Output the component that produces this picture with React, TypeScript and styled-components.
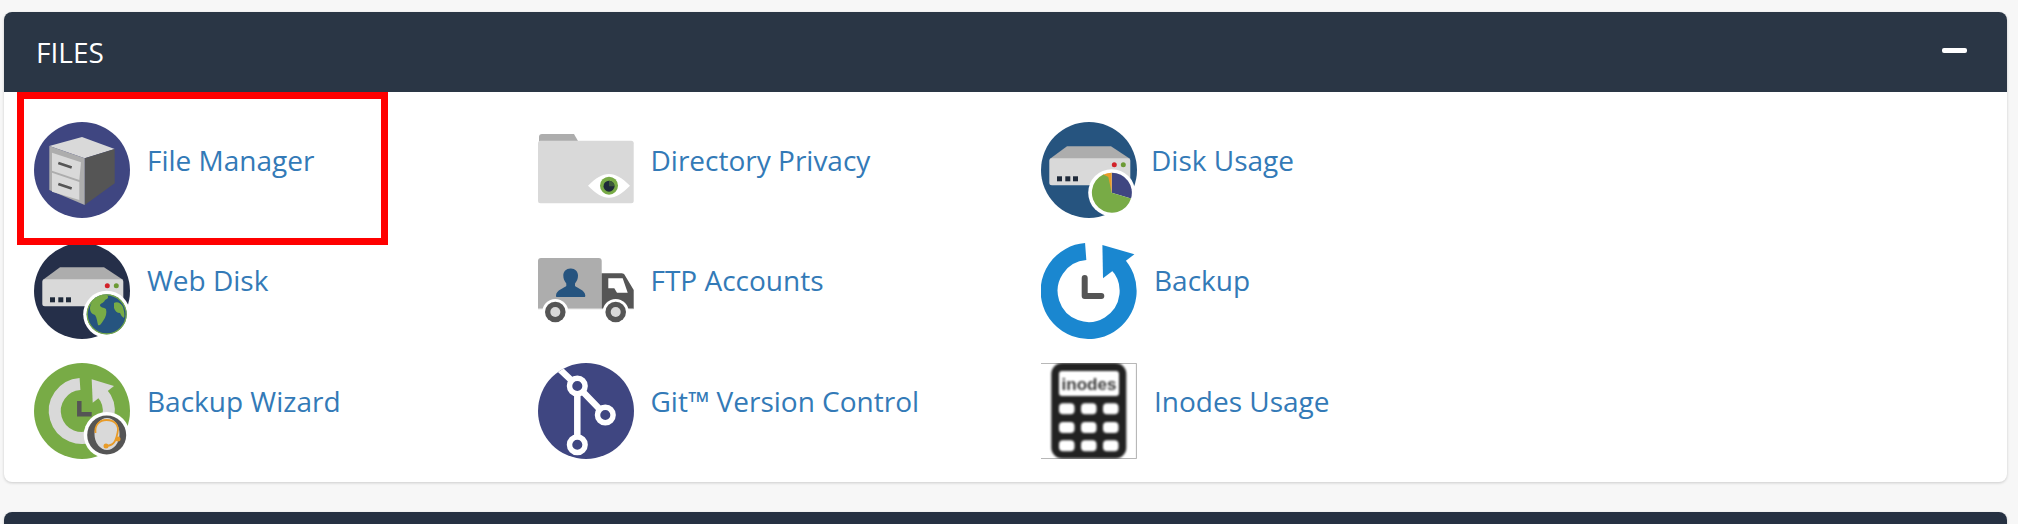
import { FC, ReactNode } from 'react';
import styled, { createGlobalStyle } from 'styled-components';

const GlobalStyle = createGlobalStyle`
  html, body {
    margin: 0;
    height: 524px;
    overflow: hidden;
    background: #f7f7f7;
    font-family: "Open Sans", "Liberation Sans", sans-serif;
  }
`;

const Page = styled.div`
  position: relative;
  display: flex;
  flex-direction: column;
  gap: 30px;
  height: 524px;
  box-sizing: border-box;
  overflow: hidden;
  padding: 12px 11px 0 4px;
`;

const Panel = styled.section`
  flex: none;
  background: #fff;
  border-radius: 8px;
  box-shadow: 0 1px 3px rgba(0, 0, 0, 0.18);
  overflow: hidden;
`;

const PanelHeader = styled.header<{ $dim?: boolean }>`
  display: flex;
  align-items: center;
  justify-content: space-between;
  height: 80px;
  padding: 0 40px 0 32px;
  background: ${({ $dim }) => ($dim ? '#263142' : '#2a3645')};
  color: #fff;
  font-size: 28px;
`;

const CollapseBar = styled.span`
  width: 25px;
  height: 5px;
  margin-top: -4px;
  border-radius: 2px;
  background: #fff;
`;

const PanelBody = styled.div`
  display: grid;
  grid-template-columns: repeat(3, 503.5px);
  grid-auto-rows: 120.5px;
  height: 360px;
  padding: 30px 0 0 30px;
  align-content: start;
`;

const Tool = styled.a<{ $gap: number }>`
  display: flex;
  align-items: flex-start;
  gap: ${({ $gap }) => $gap}px;
  color: #337ab7;
  font-size: 28px;
  line-height: 38px;
  text-decoration: none;
`;

const ToolLabel = styled.span`
  margin-top: 18.5px;
  white-space: nowrap;
`;

const IconBox = styled.svg`
  display: block;
  flex: none;
  width: 96px;
  height: 96px;
`;

const BlurGroup = styled.g`
  filter: blur(0.8px);
`;

const Highlight = styled.div`
  position: absolute;
  left: 17px;
  top: 92px;
  width: 371px;
  height: 153px;
  box-sizing: border-box;
  border: 7px solid #ff0000;
  pointer-events: none;
`;

const ServerBox = () => (
  <>
    <path d="M8.7 37 26 24.3h44L89.3 37z" fill="#adadad" />
    <rect x="8.3" y="36.3" width="81" height="27" rx="2.5" fill="#d9d9d9" />
    <circle cx="73.3" cy="42.7" r="2.5" fill="#d2232a" />
    <circle cx="82.3" cy="42.7" r="2.5" fill="#6c9a35" />
    <rect x="16" y="54.3" width="5" height="5" fill="#1f2a3a" />
    <rect x="24.3" y="54.3" width="5" height="5" fill="#1f2a3a" />
    <rect x="32" y="54.3" width="5" height="5" fill="#1f2a3a" />
  </>
);

const FileManagerIcon = () => (
  <IconBox viewBox="0 0 96 96">
    <circle cx="48" cy="48" r="48" fill="#3f4681" />
    <path d="M15.3 24 48 15l32.7 12-30 9.3z" fill="#d9d9d9" />
    <path d="M50.7 36.3 80.7 27v34.3L50.7 83z" fill="#555" />
    <path d="M15.3 24 50.7 36.3V83L15.3 68z" fill="#adadad" />
    <path d="M18 30.7 47 40.3 45.3 58 18 48.7z" fill="#d9d9d9" />
    <path d="M18 50.7 45.3 60v18L18 69.7z" fill="#d9d9d9" />
    <path d="M24.3 41 37.7 45.5M24.3 62 37.7 66.5" stroke="#555" strokeWidth="2.8" />
  </IconBox>
);

const WebDiskIcon = () => (
  <IconBox viewBox="0 0 96 96">
    <circle cx="48" cy="48" r="48" fill="#252f49" />
    <ServerBox />
    <circle cx="72.7" cy="71.3" r="23.5" fill="#fff" />
    <circle cx="72.7" cy="71.3" r="20" fill="#26547f" />
    <path
      d="M58 59c4-5 9-7 15-7 2 2 1 4-2 5-1 3-4 3-5 5 0 3 4 2 6 4 1 4 0 8-3 12-2 3-3 5-5 4-1-4-1-7-3-10-3-1-5-3-5-7 0-2 1-4 2-6zM80 60c3-2 7 0 9 4 1 4 2 8 1 11-2-1-3-3-4-5-3 0-5-2-6-5z"
      fill="#78ab46"
    />
    <circle cx="72.7" cy="71.3" r="19.5" fill="none" stroke="#78ab46" strokeWidth="1.2" />
  </IconBox>
);

const DiskUsageIcon = () => (
  <IconBox viewBox="0 0 96 96">
    <circle cx="48" cy="48" r="48" fill="#26547f" />
    <ServerBox />
    <circle cx="70.7" cy="70.7" r="23.5" fill="#fff" />
    <path d="M70.7 70.7V50.7a20 20 0 0 1 19.3 25.8z" fill="#3f4681" />
    <path d="M70.7 70.7 62 52.7a20 20 0 0 1 8.7-2z" fill="#e89b28" />
    <path d="M70.7 70.7 90 76.5A20 20 0 1 1 62.3 52.6l5 2.4z" fill="#78ab46" />
  </IconBox>
);

const DirectoryPrivacyIcon = () => (
  <IconBox viewBox="0 0 96 96">
    <path d="M1 20v-5a3 3 0 0 1 3-3h32l4 7z" fill="#adadad" />
    <rect x="0" y="18.7" width="95.7" height="62.6" rx="2.5" fill="#d9d9d9" />
    <path d="M50 63.7C58 56 64 52 71 52s13 4 21 11.7C84 71.5 78 75.7 71 75.7s-13-4.2-21-12z" fill="#fff" />
    <circle cx="71" cy="63.7" r="9" fill="#78ab46" />
    <circle cx="71" cy="64.2" r="5.5" fill="#1f2a3a" />
    <path d="M71 58.7a5.5 5.5 0 0 1 5.5 5.5H71z" fill="#3d5a3a" />
  </IconBox>
);

const FtpIcon = () => (
  <IconBox viewBox="0 0 96 96">
    <path d="M0 18a3 3 0 0 1 3-3h57.7a3 3 0 0 1 3 3v48H0z" fill="#adadad" />
    <path d="M32.3 25.5c-4 0-7 3-7 7 0 3 1 5.5 3 8v2.5c-2 2-10 4-10.3 9.5 0 1 .3 1.5 1 1.5h27c1 0 1.3-.5 1.3-1.5-.3-5.5-8.3-7.5-10.3-9.500v-2.500c2-2.500 3-5 3-8 0-4-3-7-7-7z" fill="#26547f" />
    <path d="M63.7 30.3h20c1.500 0 2.500.7 3 1.700l9 15v19H63.7z" fill="#555" />
    <path d="M70.3 35.3h14.4l5 14.4H79l-2.700-4.400h-6z" fill="#fff" />
    <path d="M0 66h95.7" stroke="#e8e8e8" strokeWidth="1" />
    <circle cx="17.3" cy="69" r="13" fill="#fff" />
    <circle cx="77.7" cy="69" r="13" fill="#fff" />
    <circle cx="17.3" cy="69" r="10.3" fill="#555" />
    <circle cx="77.7" cy="69" r="10.3" fill="#555" />
    <circle cx="17.3" cy="69" r="5" fill="#d9d9d9" />
    <circle cx="77.7" cy="69" r="5" fill="#d9d9d9" />
  </IconBox>
);

const BackupIcon = () => (
  <IconBox viewBox="0 0 96 96">
    <path d="M44.7 8.6A39.5 39.5 0 1 0 75.5 20" fill="none" stroke="#1a87d0" strokeWidth="17" />
    <path d="M61.4 2 93.4 11.3 62 35.3z" fill="#1a87d0" />
    <path d="M43.7 35V53H60.3" fill="none" stroke="#555" strokeWidth="6" strokeLinejoin="round" strokeLinecap="round" />
  </IconBox>
);

const BackupWizardIcon = () => (
  <IconBox viewBox="0 0 96 96">
    <circle cx="48" cy="48" r="48" fill="#78ab46" />
    <path d="M46 21A27 27 0 1 0 68 30" fill="none" stroke="#d9d9d9" strokeWidth="12" />
    <path d="M57.7 16.3 80 23 58.7 39.7z" fill="#d9d9d9" />
    <path d="M45.3 38V51.3H57.7" fill="none" stroke="#555" strokeWidth="4.5" />
    <circle cx="72.7" cy="72" r="23" fill="#fff" />
    <circle cx="72.7" cy="72" r="19.5" fill="#555" />
    <ellipse cx="73" cy="71" rx="12.5" ry="16" fill="#d9d9d9" />
    <path d="M61.500 70c-1-8 4-13 11-13 8 0 13 5 11 13-1 5-2 9-5 11-2 1.500-5 2-8 2" fill="none" stroke="#e89b28" strokeWidth="1.8" />
    <circle cx="72" cy="83" r="2.5" fill="#e89b28" />
    <circle cx="84" cy="76" r="2.5" fill="#e89b28" />
  </IconBox>
);

const GitIcon = () => (
  <IconBox viewBox="0 0 96 96">
    <clipPath id="git-clip">
      <circle cx="48" cy="48" r="48" />
    </clipPath>
    <circle cx="48" cy="48" r="48" fill="#3f4681" />
    <g clipPath="url(#git-clip)" fill="#3f4681" stroke="#fff">
      <path d="M15 0 39.3 23V82M39.3 23 67.3 52" fill="none" strokeWidth="6.5" />
      <circle cx="39.3" cy="23" r="7.8" strokeWidth="5.5" />
      <circle cx="67.3" cy="52" r="7.8" strokeWidth="5.5" />
      <circle cx="39.3" cy="81.7" r="7.8" strokeWidth="5.5" />
    </g>
  </IconBox>
);

const InodesText = styled.text`
  font-family: "Liberation Sans", sans-serif;
  font-size: 17px;
  font-weight: 700;
  fill: #3a3a3a;
`;

const InodesIcon = () => (
  <IconBox viewBox="0 0 96 96">
    <path d="M0 .4H95.4V95.6H0" fill="none" stroke="#9a9a9a" strokeWidth=".8" />
    <BlurGroup>
      <rect x="10.3" y="0" width="75" height="95.5" rx="11" fill="#222" />
      <rect x="18" y="8" width="60" height="25" rx="3" fill="#fff" />
      {[40.3, 59, 77.3].map((y) =>
        [18, 40, 62].map((x) => (
          <rect key={`${x}-${y}`} x={x} y={y} width="15.5" height="11" rx="4" fill="#fff" />
        )),
      )}
      <InodesText x="48" y="26.5" textAnchor="middle">inodes</InodesText>
    </BlurGroup>
  </IconBox>
);

const tools: { name: string; icon: ReactNode; gap?: number }[] = [
  { name: 'File Manager', icon: <FileManagerIcon /> },
  { name: 'Directory Privacy', icon: <DirectoryPrivacyIcon /> },
  { name: 'Disk Usage', icon: <DiskUsageIcon />, gap: 14 },
  { name: 'Web Disk', icon: <WebDiskIcon /> },
  { name: 'FTP Accounts', icon: <FtpIcon /> },
  { name: 'Backup', icon: <BackupIcon /> },
  { name: 'Backup Wizard', icon: <BackupWizardIcon /> },
  { name: 'Git™ Version Control', icon: <GitIcon /> },
  { name: 'Inodes Usage', icon: <InodesIcon /> },
];

const App: FC = () => (
  <Page>
    <GlobalStyle />
    <Panel>
      <PanelHeader>
        FILES
        <CollapseBar />
      </PanelHeader>
      <PanelBody>
        {tools.map((tool) => (
          <Tool key={tool.name} href="#" $gap={tool.gap ?? 17}>
            {tool.icon}
            <ToolLabel>{tool.name}</ToolLabel>
          </Tool>
        ))}
      </PanelBody>
    </Panel>
    <Panel>
      <PanelHeader $dim />
    </Panel>
    <Highlight />
  </Page>
);

export default App;
